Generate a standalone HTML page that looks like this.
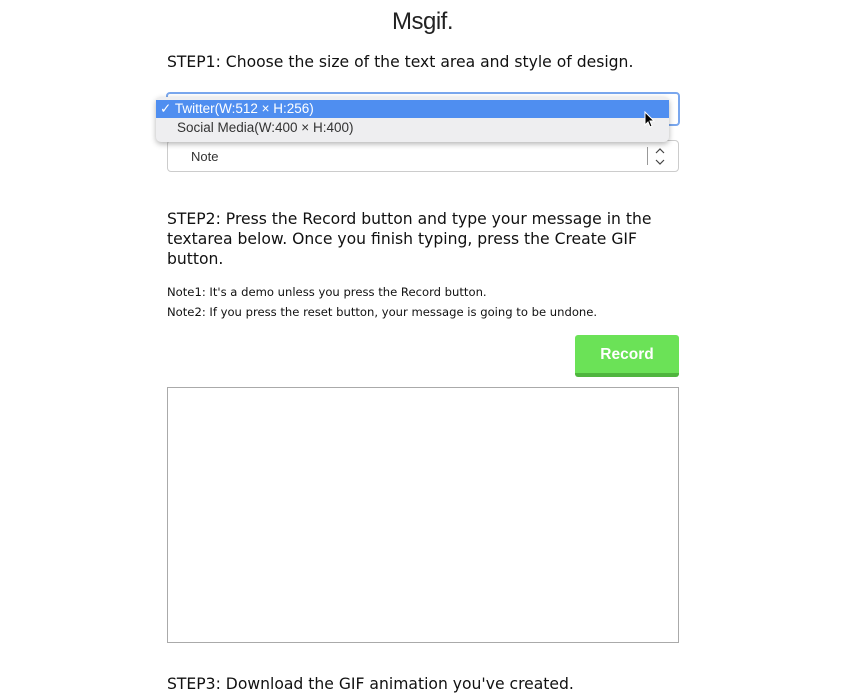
<!DOCTYPE html>
<html><head><style>
*{margin:0;padding:0;box-sizing:border-box}
body{width:847px;height:698px;background:#fff;position:relative;overflow:hidden;font-family:"DejaVu Sans","Liberation Sans",sans-serif;color:#111}
.a{position:absolute;white-space:nowrap}
</style></head><body>
<div class="a" style="left:392px;top:8px;font-size:24px;letter-spacing:-0.5px;color:#222;font-family:'Liberation Sans',sans-serif">Msgif.</div>
<div class="a" style="left:167px;top:53px;font-size:15.6px">STEP1: Choose the size of the text area and style of design.</div>
<div class="a" style="left:166px;top:92px;width:514px;height:34px;border:2px solid #7aa7ee;border-radius:4px"></div>
<div class="a" style="left:167px;top:140px;width:512px;height:32px;border:1px solid #ccc;border-radius:4px;background:#fff"></div>
<div class="a" style="left:191px;top:149px;font-size:13px;font-family:'Liberation Sans',sans-serif;color:#333">Note</div>
<div class="a" style="left:647px;top:147px;width:1px;height:18px;background:#999"></div>
<svg class="a" style="left:654px;top:147px" width="12" height="20"><path d="M2 6l4-4 4 4M2 13l4 4 4-4" fill="none" stroke="#444" stroke-width="1.2"/></svg>
<div class="a" style="left:156px;top:97px;width:513px;height:45px;background:#eeeef0;border-radius:5px;box-shadow:0 2px 6px rgba(0,0,0,.3)"></div>
<div class="a" style="left:156px;top:100px;width:513px;height:18px;background:#4f8ef0"></div>
<div class="a" style="left:160px;top:101px;font-size:13.5px;font-family:'Liberation Sans',sans-serif;color:#fff">✓ Twitter(W:512 × H:256)</div>
<div class="a" style="left:177px;top:120px;font-size:13.5px;font-family:'Liberation Sans',sans-serif;color:#333">Social Media(W:400 × H:400)</div>
<svg class="a" style="left:644px;top:111px" width="12" height="18"><path d="M1 1v13l3-3 2 5 2-1-2-5h4z" fill="#000" stroke="#fff" stroke-width="1"/></svg>
<div class="a" style="left:167px;top:209px;font-size:15.6px;line-height:20px">STEP2: Press the Record button and type your message in the<br>textarea below. Once you finish typing, press the Create GIF<br>button.</div>
<div class="a" style="left:167px;top:285px;font-size:11.6px">Note1: It's a demo unless you press the Record button.</div>
<div class="a" style="left:167px;top:305px;font-size:11.6px">Note2: If you press the reset button, your message is going to be undone.</div>
<div class="a" style="left:575px;top:335px;width:104px;height:42px;background:#6be257;border-bottom:4px solid #4fb53e;border-radius:3px;color:#fff;font-weight:bold;font-size:15.5px;font-family:'Liberation Sans',sans-serif;text-align:center;line-height:39px">Record</div>
<div class="a" style="left:167px;top:387px;width:512px;height:256px;border:1px solid #aaa"></div>
<div class="a" style="left:167px;top:675px;font-size:15.6px">STEP3: Download the GIF animation you've created.</div>
</body></html>
